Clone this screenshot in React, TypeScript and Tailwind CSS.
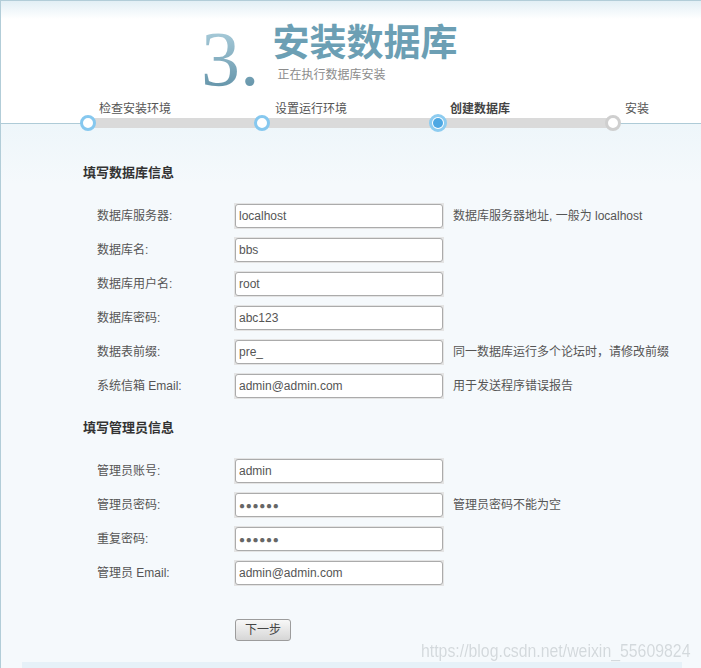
import React from "react";

type Row = { label: string; value: string; hint?: string; password?: boolean };

const dbRows: Row[] = [
  { label: "数据库服务器:", value: "localhost", hint: "数据库服务器地址, 一般为 localhost" },
  { label: "数据库名:", value: "bbs" },
  { label: "数据库用户名:", value: "root" },
  { label: "数据库密码:", value: "abc123" },
  { label: "数据表前缀:", value: "pre_", hint: "同一数据库运行多个论坛时，请修改前缀" },
  { label: "系统信箱 Email:", value: "admin@admin.com", hint: "用于发送程序错误报告" },
];

const adminRows: Row[] = [
  { label: "管理员账号:", value: "admin" },
  { label: "管理员密码:", value: "●●●●●●", password: true, hint: "管理员密码不能为空" },
  { label: "重复密码:", value: "●●●●●●", password: true },
  { label: "管理员 Email:", value: "admin@admin.com" },
];

function FormRow({ row }: { row: Row }) {
  return (
    <div className="flex items-center h-[26px]">
      <div className="w-[137px] text-[12px] leading-[16px] text-[#555]">{row.label}</div>
      <div className="p-px bg-[#e4e4e4]">
        {row.password ? (
          <input
            readOnly
            type="text"
            value={row.value}
            className="block w-[208px] h-[24px] border border-[#ababab] rounded-[3px] bg-white pl-[3px] text-[10px] tracking-[0.7px] text-[#666] outline-none"
          />
        ) : (
          <input
            readOnly
            type="text"
            value={row.value}
            className="block w-[208px] h-[24px] border border-[#ababab] rounded-[3px] bg-white pl-[3px] text-[12px] text-[#555] outline-none"
          />
        )}
      </div>
      {row.hint && (
        <div className="ml-[9px] text-[12px] leading-[16px] text-[#555] whitespace-nowrap">{row.hint}</div>
      )}
    </div>
  );
}

export default function App() {
  return (
    <div
      className="relative w-[701px] h-[668px] overflow-hidden border-l border-t border-[#b2cdd8] bg-[#f5f9fc]"
      style={{ fontFamily: '"Liberation Sans", "Noto Sans CJK SC", sans-serif' }}
    >
      {/* header */}
      <div className="h-[123px] border-b border-[#aecbd7] bg-[linear-gradient(to_bottom,#e2eff5,#ffffff_18px)] flex flex-col">
        <div className="flex pl-[200px] pt-[19px]">
          <span
            className="text-[78px] leading-[78px] bg-gradient-to-b from-[#b4d5e2] to-[#5a8ca2] bg-clip-text text-transparent"
            style={{ fontFamily: '"Liberation Serif", serif' }}
          >
            3.
          </span>
          <div className="ml-[13px] mt-[5px] flex flex-col">
            <div className="text-[37px] leading-[37px] font-bold text-[#6c9fb4]">安装数据库</div>
            <div className="mt-[5px] pl-[5px] text-[12px] leading-[16px] text-[#8c8c8c]">正在执行数据库安装</div>
          </div>
        </div>
        <div className="flex pl-[98px] mt-[3px] text-[12px] leading-[16px] text-[#555]">
          <div className="w-[176px]">检查安装环境</div>
          <div className="w-[175px]">设置运行环境</div>
          <div className="w-[175px] font-bold text-[#444]">创建数据库</div>
          <div>安装</div>
        </div>
      </div>

      {/* stepper bar over the header line */}
      <div className="relative h-0">
        <div className="absolute left-[86px] top-[-6px] w-[525px] h-[10px] bg-[#dadada]" />
        <div className="absolute left-[79px] top-[-9px] w-[16px] h-[16px] rounded-full border-[3px] border-[#86c8ef] bg-white" />
        <div className="absolute left-[253px] top-[-9px] w-[16px] h-[16px] rounded-full border-[3px] border-[#86c8ef] bg-white" />
        <div className="absolute left-[428px] top-[-10px] w-[18px] h-[18px] rounded-full border-[3px] border-[#8dccf0] bg-white flex items-center justify-center">
          <div className="w-[10px] h-[10px] rounded-full bg-[#4ea8e3]" />
        </div>
        <div className="absolute left-[604px] top-[-9px] w-[16px] h-[16px] rounded-full border-[3px] border-[#cfcfcf] bg-white" />
      </div>

      {/* body */}
      <div className="bg-[linear-gradient(to_bottom,#eef6fa,#f5f9fc_60px)]">
        <div className="pl-[82px] pt-[39px]">
          <div className="text-[13px] leading-[20px] font-bold text-[#333]">填写数据库信息</div>
          <div className="mt-[20px] pl-[14px] flex flex-col gap-[8px]">
            {dbRows.map((r) => (
              <FormRow key={r.label} row={r} />
            ))}
          </div>
          <div className="mt-[19px] text-[13px] leading-[20px] font-bold text-[#333]">填写管理员信息</div>
          <div className="mt-[20px] pl-[14px] flex flex-col gap-[8px]">
            {adminRows.map((r) => (
              <FormRow key={r.label} row={r} />
            ))}
          </div>
          <button className="ml-[152px] mt-[33px] w-[56px] h-[22px] border border-[#9c9c9c] rounded-[3px] bg-gradient-to-b from-[#f8f8f8] to-[#d6d6d6] text-[12px] leading-[16px] text-[#444]">
            下一步
          </button>
        </div>
        <div className="ml-[21px] mt-[21px] w-[660px] h-[10px] bg-[#e6f1f8]" />
      </div>

      {/* watermark */}
      <div
        className="absolute left-[420px] top-[640px] origin-left scale-x-[0.88] text-[18px] leading-[20px] text-[#d3d9dd] whitespace-nowrap"
        style={{ textShadow: "0 0 1px #ffffff" }}
      >
        https://blog.csdn.net/weixin_55609824
      </div>
    </div>
  );
}
